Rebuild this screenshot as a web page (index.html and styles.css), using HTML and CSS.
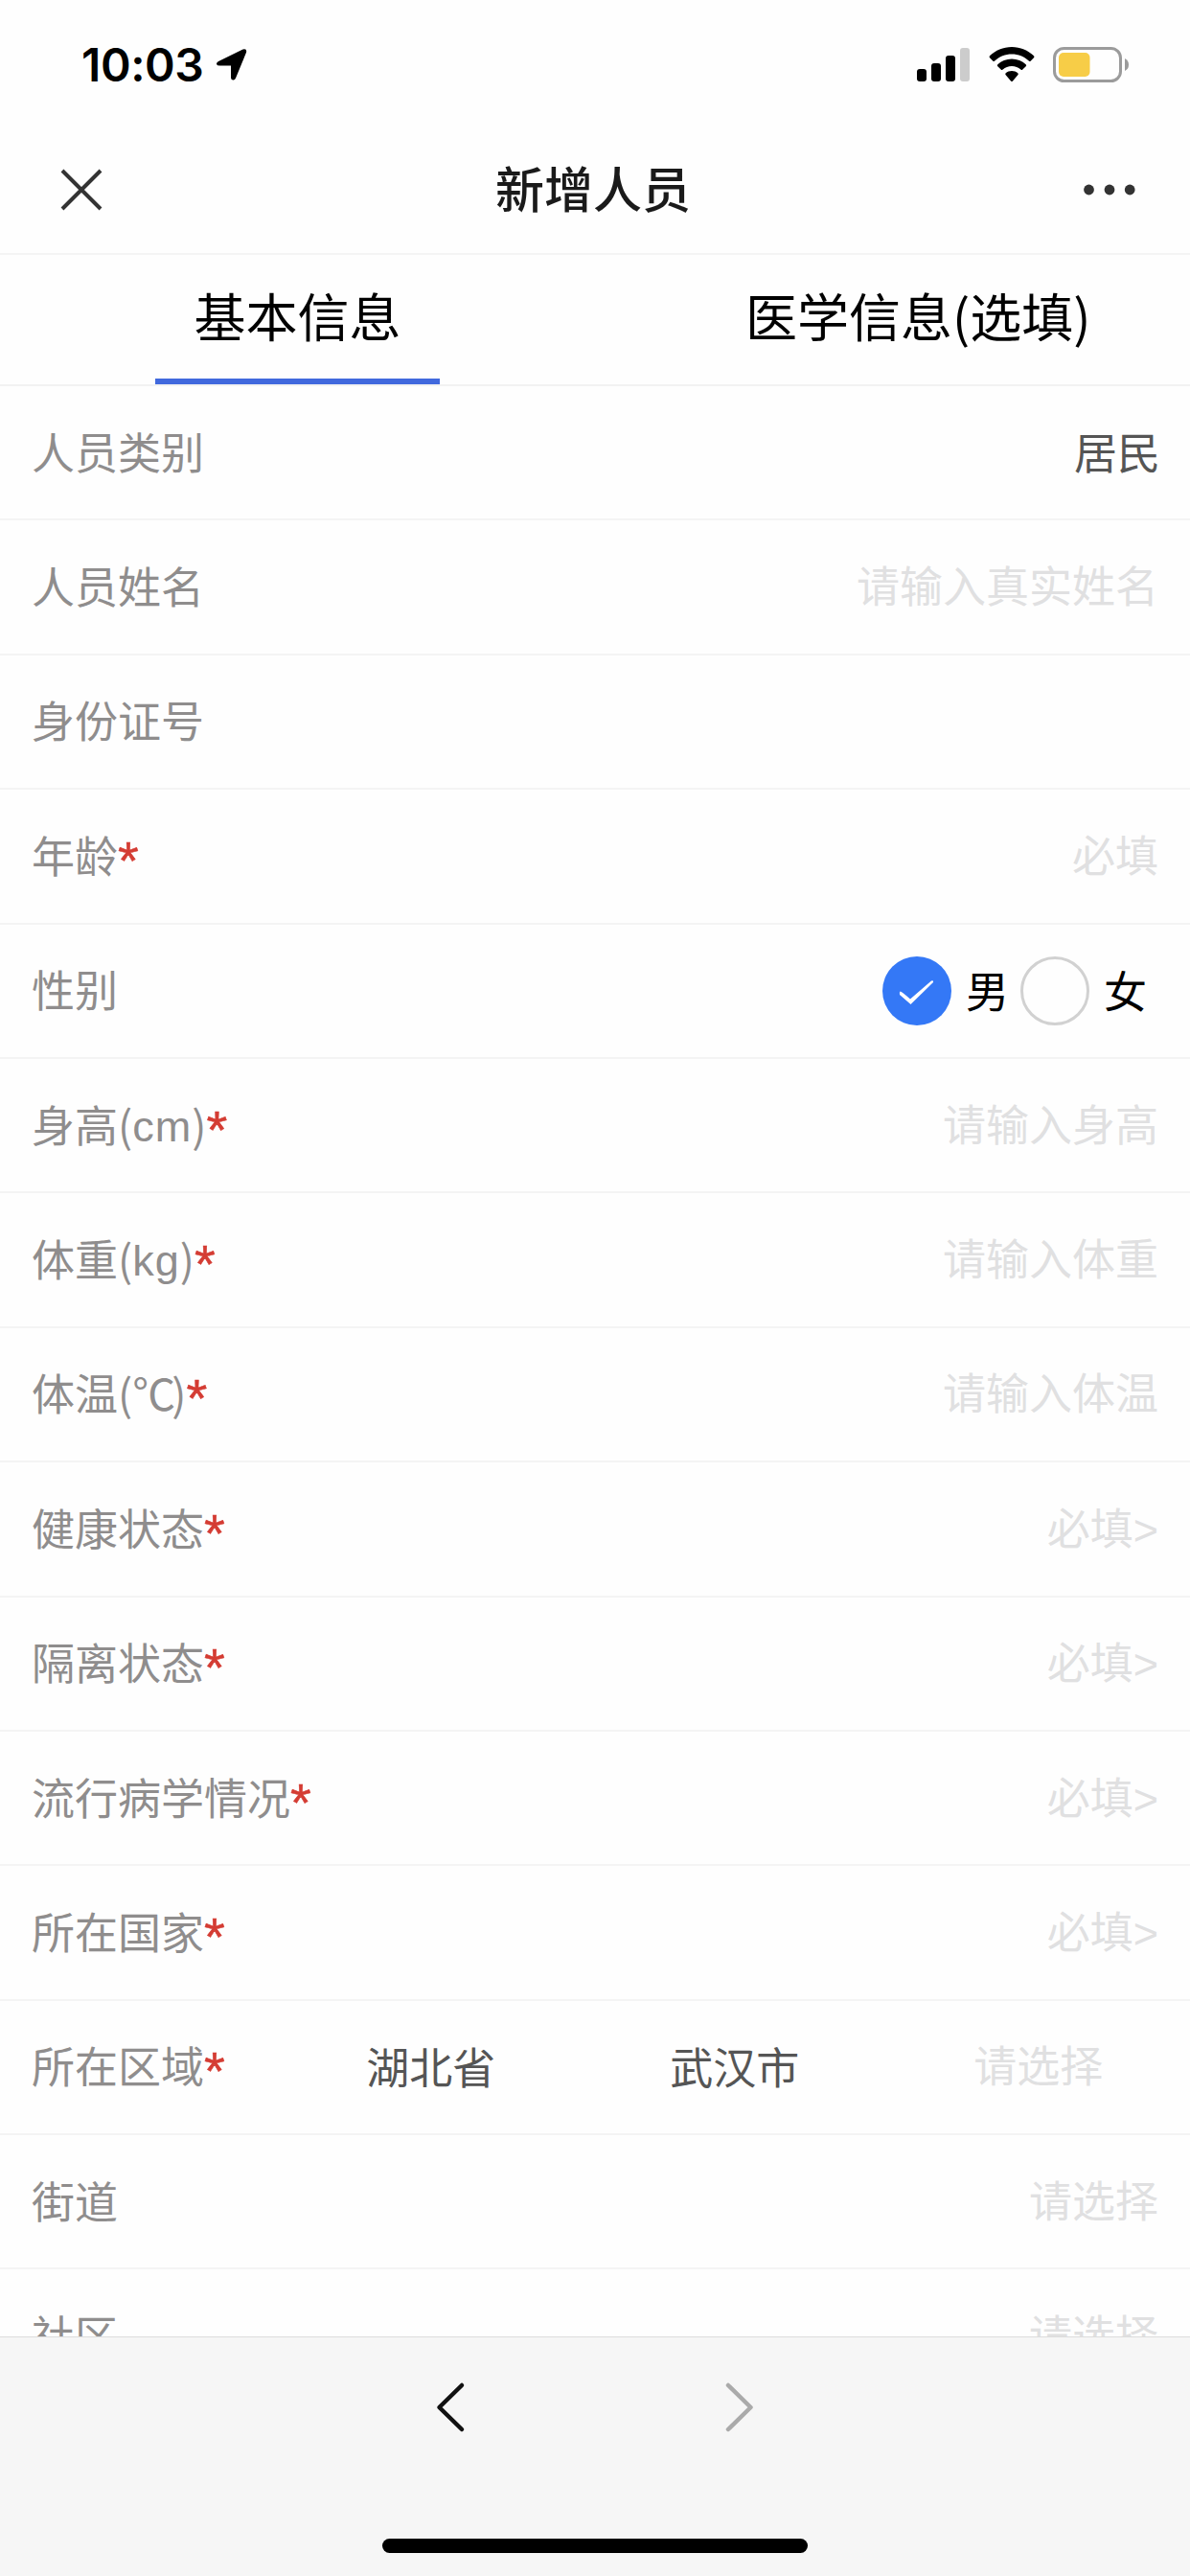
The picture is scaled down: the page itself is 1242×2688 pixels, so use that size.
FILE: index.html
```html
<!DOCTYPE html>
<html lang="zh-CN">
<head>
<meta charset="utf-8">
<title>新增人员</title>
<link rel="stylesheet" href="styles.css">
</head>
<body>
<div class="screen">
  <div class="status">
    <span class="time">10:03</span>
    <svg class="locate" width="34" height="36" viewBox="0 0 34 36"><path d="M3 14L28.500 1.500Q33 .300 32 4.800L21 31.500Q20 34 18 33.500Q16 33 16 31V18.500H4.500Q1.500 18.500 1 17Q.800 15.300 3 14Z"/></svg>
    <svg class="signal" width="56" height="36" viewBox="0 0 56 36"><rect y="23" width="10" height="13" rx="3"/><rect x="15" y="17" width="10" height="19" rx="3"/><rect x="30" y="9" width="10" height="27" rx="3"/><rect class="weak" x="45" y="1" width="10" height="35" rx="3"/></svg>
    <svg class="wifi" width="48" height="37" viewBox="0 0 48 37"><path d="M24 0C33 0 41 3.500 47 9.300Q48 10.300 47 11.300L43.800 14.500Q42.800 15.500 41.800 14.500C37 10 30.800 7.500 24 7.500S11 10 6.200 14.500Q5.200 15.500 4.200 14.500L1 11.300Q0 10.300 1 9.300C7 3.500 15 0 24 0ZM24 12.500C29.700 12.500 34.800 14.700 38.700 18.200Q39.700 19.200 38.700 20.200L35.300 23.500Q34.300 24.500 33.300 23.600C30.800 21.400 27.600 20 24 20S17.200 21.400 14.700 23.600Q13.700 24.500 12.700 23.500L9.300 20.200Q8.300 19.200 9.300 18.200C13.200 14.700 18.300 12.500 24 12.500ZM24 25C26.400 25 28.600 25.900 30.300 27.300Q31.300 28.200 30.300 29.200L25 35.500Q24 36.500 23 35.500L17.700 29.200Q16.700 28.200 17.700 27.300C19.400 25.900 21.600 25 24 25Z"/></svg>
    <svg class="battery" width="80" height="38" viewBox="0 0 80 38"><rect class="shell" x="1.500" y="1.500" width="69" height="34" rx="10"/><rect class="charge" x="6" y="6" width="32.500" height="25" rx="5"/><path class="tip" d="M75 12Q79 14 79 18.500T75 25Z"/></svg>
  </div>
  <div class="navbar">
    <svg class="close" width="46" height="46" viewBox="0 0 46 46"><path d="M3 3L43 43M43 3L3 43"/></svg>
    <h1 class="title">新增人员</h1>
    <svg class="more" width="56" height="12" viewBox="0 0 56 12"><circle cx="6.500" cy="6" r="5.400"/><circle cx="28" cy="6" r="5.400"/><circle cx="49.200" cy="6" r="5.400"/></svg>
  </div>
  <div class="tabs">
    <div class="tab active"><span>基本信息</span></div>
    <div class="tab second"><span>医学信息(选填)</span></div>
  </div>
  <div class="form">
    <div class="row"><span class="label">人员类别</span><span class="value">居民</span></div>
    <div class="row"><span class="label">人员姓名</span><span class="hint">请输入真实姓名</span></div>
    <div class="row"><span class="label">身份证号</span></div>
    <div class="row"><span class="label">年龄<i>*</i></span><span class="hint">必填</span></div>
    <div class="row">
      <span class="label">性别</span>
      <div class="radios">
        <svg width="72" height="72" viewBox="0 0 72 72"><circle class="on" cx="36" cy="36" r="36"/><path class="tick" d="M18.500 36.500Q20 36.500 29 44.500L51 25.500Q53.500 24.500 53 27L29.500 50L18 40Q17.500 37 18.500 36.500Z"/></svg><span>男</span>
        <svg width="72" height="72" viewBox="0 0 72 72"><circle class="off" cx="36" cy="36" r="34.500"/></svg><span>女</span>
      </div>
    </div>
    <div class="row"><span class="label">身高(<b>cm</b>)<i>*</i></span><span class="hint">请输入身高</span></div>
    <div class="row"><span class="label">体重(<b>kg</b>)<i>*</i></span><span class="hint">请输入体重</span></div>
    <div class="row"><span class="label">体温(<span class="degree">℃</span>)<i>*</i></span><span class="hint">请输入体温</span></div>
    <div class="row"><span class="label">健康状态<i>*</i></span><span class="hint">必填<b>&gt;</b></span></div>
    <div class="row"><span class="label">隔离状态<i>*</i></span><span class="hint">必填<b>&gt;</b></span></div>
    <div class="row"><span class="label">流行病学情况<i>*</i></span><span class="hint">必填<b>&gt;</b></span></div>
    <div class="row"><span class="label">所在国家<i>*</i></span><span class="hint">必填<b>&gt;</b></span></div>
    <div class="row region"><span class="label">所在区域<i>*</i></span><span class="value">湖北省</span><span class="value">武汉市</span><span class="hint">请选择</span></div>
    <div class="row"><span class="label">街道</span><span class="hint">请选择</span></div>
    <div class="row"><span class="label">社区</span><span class="hint">请选择</span></div>
  </div>
  <div class="footer">
    <div class="pager">
      <svg class="back" width="32" height="54" viewBox="0 0 32 54"><path d="M28 4L4.500 27L28 50"/></svg>
      <svg class="forward" width="32" height="54" viewBox="0 0 32 54"><path d="M4 4L27.500 27L4 50"/></svg>
    </div>
    <div class="home"></div>
  </div>
</div>
</body>
</html>
```
FILE: styles.css
```css
* { box-sizing: border-box; }
body {
  margin: 0;
  background: #fefefe;
  font-family: "Noto Sans CJK SC", sans-serif;
  color: #000;
}
svg { display: block; flex: none; }
.screen {
  width: 1242px;
  height: 2688px;
  display: flex;
  flex-direction: column;
  overflow: hidden;
}
.status {
  height: 132px;
  padding: 0 63px 0 85px;
  display: flex;
  align-items: flex-start;
}
.time {
  font: 600 48px/58px Inter, sans-serif;
  margin-top: 39px;
  width: 140px;
  letter-spacing: -0.4px;
}
.locate { margin-top: 50px; }
.signal { margin: 49px 19px 0 auto; }
.signal .weak { fill: #ccc; }
.wifi { margin: 49px 19px 0 0; }
.battery { margin-top: 49px; }
.shell { fill: none; stroke: #9b9b9b; stroke-width: 3; }
.charge { fill: #f7cd47; }
.tip { fill: #9b9b9b; }
.navbar {
  height: 134px;
  padding: 0 56px 0 62px;
  display: flex;
  align-items: center;
  justify-content: space-between;
  border-bottom: 2px solid #f4f4f4;
}
.close { fill: none; stroke: #333; stroke-width: 4; }
.title {
  margin: 0;
  padding-bottom: 6px;
  font-size: 51px;
  line-height: 70px;
  font-weight: 500;
  color: #1a1a1a;
}
.more { fill: #333; }
.tabs {
  height: 137px;
  display: flex;
  justify-content: center;
  border-bottom: 2px solid #f2f2f2;
}
.tab {
  height: 135px;
  width: 297px;
  margin: 0 162px;
  font-size: 54px;
  line-height: 125px;
  text-align: center;
  white-space: nowrap;
}
.tab.active { border-bottom: 6px solid #4169dd; }
.tab.second { width: 360px; margin: 0 104px 0 157px; }
.form {
  height: 2035px;
  overflow: hidden;
}
.row {
  height: 140.400px;
  padding: 0 33px 0 33px;
  display: flex;
  align-items: center;
  justify-content: space-between;
  border-bottom: 2px solid #f4f4f4;
  font-size: 45px;
  line-height: 64px;
}
.label { color: #8f8d8d; padding-bottom: 3px; }
.label b, .hint b {
  font-family: "Liberation Sans", sans-serif;
  font-weight: 400;
  line-height: 0;
}
.label b {
  letter-spacing: 1px;
  vertical-align: 1px;
}
.label i {
  font: normal 400 56px/0 "Liberation Sans", sans-serif;
  vertical-align: -6px;
  color: #d43c33;
  -webkit-text-stroke: 0.5px #d43c33;
}
.degree { letter-spacing: -4px; }
.value { color: #555; padding-bottom: 3px; margin-right: -2px; }
.hint { color: #e0e0e1; padding-bottom: 5px; }
.radios {
  display: flex;
  align-items: center;
  margin-right: 12px;
}
.radios span { width: 57px; padding-bottom: 2px; }
.radios span:last-child { width: 45px; }
.radios svg { margin-right: 15px; }
.on { fill: #3478f6; }
.off { fill: none; stroke: #d1d1d1; stroke-width: 3; }
.tick { fill: #fff; }
.region {
  display: grid;
  grid-template-columns: 258px repeat(3, 316.500px);
  padding-right: 0;
}
.region .value, .region .hint { text-align: center; margin-right: 0; }
.region .value { padding-bottom: 1px; }
.footer {
  height: 250px;
  background: #f6f6f6;
  border-top: 1px solid #dcdcdc;
  display: flex;
  flex-direction: column;
  align-items: center;
}
.pager {
  width: 334px;
  height: 54px;
  margin-top: 46px;
  display: flex;
  justify-content: space-between;
}
.back, .forward {
  fill: none;
  stroke: #111;
  stroke-width: 4.500;
  stroke-linecap: round;
  stroke-linejoin: round;
}
.forward { stroke: #aaa; }
.home {
  width: 444px;
  height: 15px;
  margin-top: 110px;
  border-radius: 8px;
  background: #000;
}
```
